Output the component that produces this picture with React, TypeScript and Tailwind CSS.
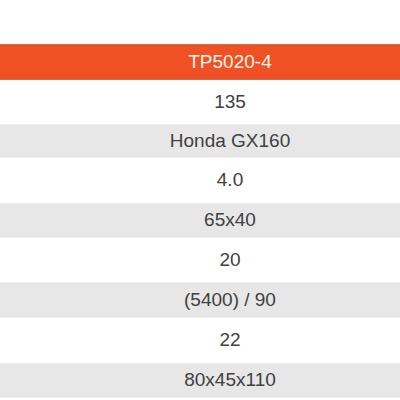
import React from "react";

const rows: { v: string; h: string; gray: boolean }[] = [
  { v: "135", h: "h-[44px]", gray: false },
  { v: "Honda GX160", h: "h-[34px]", gray: true },
  { v: "4.0", h: "h-[45px]", gray: false },
  { v: "65x40", h: "h-[35px]", gray: true },
  { v: "20", h: "h-[44px]", gray: false },
  { v: "(5400) / 90", h: "h-[36px]", gray: true },
  { v: "22", h: "h-[45px]", gray: false },
  { v: "80x45x110", h: "h-[35px]", gray: true },
];

export default function App() {
  return (
    <div
      className="w-[400px] h-[400px] overflow-hidden bg-white text-[19px] text-[#414141]"
      style={{ fontFamily: '"Liberation Sans", Arial, sans-serif' }}
    >
      <div className="h-[44px] bg-white" />
      <div className="h-[36px] bg-[#ef5124] border-y border-[#d0704f] flex items-center justify-center pl-[60px] text-[#fff5ee]">
        TP5020-4
      </div>
      {rows.map((r, i) => (
        <div
          key={i}
          className={
            r.gray
              ? `${r.h} bg-[#e7e7e8] border-y border-[#efefef] flex items-center justify-center pl-[60px]`
              : `${r.h} bg-white flex items-center justify-center pl-[60px]`
          }
        >
          {r.v}
        </div>
      ))}
    </div>
  );
}
